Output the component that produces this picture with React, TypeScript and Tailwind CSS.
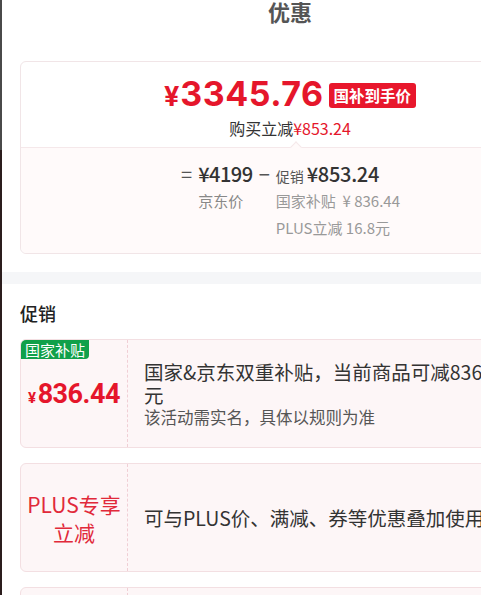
import React from "react";

const RED = "text-[#e5162b]";

interface Promo {
  id: string;
  tag?: string;
  left: React.ReactNode;
  lines: { text: string; cls: string }[];
}

const promos: Promo[] = [
  {
    id: "gov",
    tag: "国家补贴",
    left: (
      <span className={`${RED} font-bold font-['Roboto',sans-serif] tracking-[-0.5px] leading-none`}>
        <span className="text-[15px] mr-[2px]">¥</span>
        <span className="text-[27px]">836.44</span>
      </span>
    ),
    lines: [
      { text: "国家&京东双重补贴，当前商品可减836元", cls: "text-[19.5px] leading-[23px] text-[#333]" },
      { text: "该活动需实名，具体以规则为准", cls: "text-[16.5px] leading-[22px] text-[#555]" },
    ],
  },
  {
    id: "plus",
    left: (
      <span className="text-[#e1293a] text-[21px] leading-[28px] text-center">
        PLUS专享
        <br />
        立减
      </span>
    ),
    lines: [{ text: "可与PLUS价、满减、券等优惠叠加使用", cls: "text-[19.5px] leading-[23px] text-[#333]" }],
  },
];

const PromoCard: React.FC<{ p: Promo }> = ({ p }) => (
  <div className="relative flex h-[109px] rounded-[6px] border border-[#f3dfe2] bg-[#fdf6f7]">
    {p.tag && (
      <span className="absolute left-0 top-0 rounded-tl-[5px] rounded-br-[4px] bg-[#10a04a] px-[4px] text-[15px] leading-[19px] text-white">
        {p.tag}
      </span>
    )}
    <div className="flex w-[107px] shrink-0 items-center justify-center border-r border-dashed border-[#f0cfd5] pt-[1px]">
      {p.left}
    </div>
    <div className="flex w-[366px] flex-col justify-center pl-[16px]">
      {p.lines.map((l) => (
        <div key={l.text} className={l.cls}>
          {l.text}
        </div>
      ))}
    </div>
  </div>
);

export default function App() {
  return (
    <div className="flex h-[595px] w-[481px] overflow-hidden bg-white font-['Noto_Sans_CJK_SC',sans-serif]">
      {/* edge of the page behind */}
      <div className="flex w-[2px] shrink-0 flex-col">
        <div className="h-[150px] bg-[#4a4a4a]" />
        <div className="flex-1 bg-[#2b1d1d]" />
      </div>

      <div className="w-[576px] shrink-0">
        <h2 className="text-center text-[22px] font-bold leading-[22px] text-[#555]">优惠</h2>

        <div className="px-[18px] pt-[39px]">
          <div className="rounded-[6px] border border-[#f1e5e7]">
            <div className="flex flex-col items-center pt-[13px] pb-[8px]">
              <div className="flex h-[38px] items-center gap-[5px]">
                <span className={`${RED} flex items-baseline font-bold font-['Inter',sans-serif] leading-none`}>
                  <span className="text-[27px] mr-[1px]">¥</span>
                  <span className="text-[34px] tracking-[0.5px]">3345.76</span>
                </span>
                <span className="mt-[3px] rounded-[3px] bg-[#e8172c] px-[5px] text-[15.5px] font-bold leading-[25px] text-white">
                  国补到手价
                </span>
              </div>
              <div className="mt-[4px] text-[16px] leading-[22px] text-[#333]">
                购买立减<span className={RED}>¥853.24</span>
              </div>
            </div>

            <div className="relative rounded-b-[6px] border-t border-[#f5e8ea] bg-[#fffafa] pt-[12px] pb-[12px]">
              <div className="absolute left-[271px] top-[-5px] h-[8px] w-[8px] rotate-45 border-l border-t border-[#f5e8ea] bg-[#fffafa]" />
              <div className="flex justify-center pl-[1px]">
                <div className="flex items-start">
                  <span className="text-[20px] leading-[27px] text-[#555]">=</span>
                  <div className="ml-[6px] flex flex-col">
                    <span className="text-[20px] font-medium leading-[27px] tracking-[-0.5px] text-[#333]">¥4199</span>
                    <span className="text-[15px] leading-[27px] text-[#888]">京东价</span>
                  </div>
                </div>
                <span className="mx-[6px] text-[20px] leading-[27px] text-[#555]">−</span>
                <div className="flex flex-col">
                  <div className="flex h-[27px] items-baseline">
                    <span className="text-[14px] leading-[27px] text-[#555]">促销</span>
                    <span className="ml-[3px] text-[20px] font-medium leading-[27px] tracking-[-0.3px] text-[#333]">¥853.24</span>
                  </div>
                  <span className="whitespace-pre text-[15px] leading-[27px] text-[#999]">国家补贴  ¥ 836.44</span>
                  <span className="text-[15px] leading-[27px] text-[#999]">PLUS立减 16.8元</span>
                </div>
              </div>
            </div>
          </div>
        </div>

        <div className="mt-[18px] h-[12px] bg-[#f5f6f8]" />

        <div className="px-[18px]">
          <h3 className="pt-[17px] pb-[13px] text-[18px] font-medium leading-[25px] text-[#222]">促销</h3>
          <div className="flex flex-col gap-[15px]">
            {promos.map((p) => (
              <PromoCard key={p.id} p={p} />
            ))}
            <div className="flex h-[109px] rounded-[6px] border border-[#f3dfe2] bg-[#fdf6f7]">
              <div className="w-[107px] border-r border-dashed border-[#f0cfd5]" />
            </div>
          </div>
        </div>
      </div>
    </div>
  );
}
